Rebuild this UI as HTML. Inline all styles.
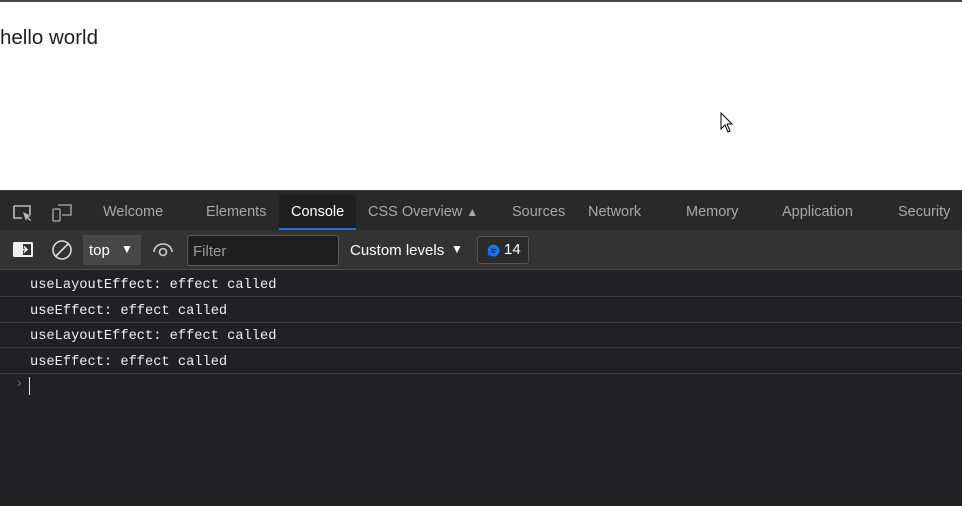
<!DOCTYPE html>
<html><head><meta charset="utf-8"><style>
*{margin:0;padding:0;box-sizing:border-box}
body{width:962px;height:506px;overflow:hidden;background:#fff;font-family:"Liberation Sans",sans-serif;position:relative}
.top{position:absolute;left:0;top:0;width:962px;height:2px;background:#4a4a4a}
.hello{position:absolute;left:0;top:26px;font-size:20.5px;color:#222}
.dt{position:absolute;left:0;top:190px;width:962px;height:316px;background:#202124}
.tabs{position:absolute;left:0;top:0;width:962px;height:40px;background:#292929;border-top:1px solid #3c3c3c}
.tab{position:absolute;top:13px;font-size:14.5px;color:#a8a8a8}
.active{position:absolute;left:279px;top:4px;width:77px;height:36px;background:#1f1f1f;border-bottom:3px solid #1a73e8}
.tb{position:absolute;left:0;top:40px;width:962px;height:40px;background:#333;border-bottom:1px solid #4a4a4a}
.line{position:absolute;left:0;width:962px;height:25.5px;border-bottom:1px solid #3a3a3a;font-family:"Liberation Mono",monospace;font-size:13.7px;color:#f0f0f0;padding-left:30px;line-height:30px}
</style></head><body>
<div class="top"></div>
<div class="hello">hello world</div>
<svg style="position:absolute;left:720px;top:112px" width="14" height="22" viewBox="0 0 14 22"><path d="M1 1 L1 17 L5 13 L8 20 L10 19 L7 12 L12 12 Z" fill="#fff" stroke="#000" stroke-width="1"/></svg>
<div class="dt">
 <div class="tabs">
  <div class="active"></div>
  <svg style="position:absolute;left:12px;top:13px" width="22" height="18" viewBox="0 0 22 18"><path d="M2 2h16v9M2 2v12h8" fill="none" stroke="#bbb" stroke-width="1.6"/><path d="M11 8l8 4-3 1 3 3-1 1-3-3-1 3z" fill="#bbb"/></svg>
  <svg style="position:absolute;left:51px;top:12px" width="22" height="20" viewBox="0 0 22 20"><rect x="2" y="6" width="7" height="12" rx="1" fill="none" stroke="#999" stroke-width="1.5"/><path d="M7 2h13v10h-9" fill="none" stroke="#999" stroke-width="1.5"/></svg>
  <span class="tab" style="left:103px">Welcome</span>
  <span class="tab" style="left:206px">Elements</span>
  <span class="tab" style="left:291px;color:#fff">Console</span>
  <span class="tab" style="left:368px">CSS Overview <span style="font-size:12px">&#9650;</span></span>
  <span class="tab" style="left:512px">Sources</span>
  <span class="tab" style="left:588px">Network</span>
  <span class="tab" style="left:686px">Memory</span>
  <span class="tab" style="left:782px">Application</span>
  <span class="tab" style="left:898px">Security</span>
 </div>
 <div class="tb">
  <svg style="position:absolute;left:12px;top:11px" width="22" height="18" viewBox="0 0 22 18"><rect x="1" y="1" width="20" height="15" rx="1.5" fill="#eee"/><rect x="11" y="3" width="8" height="11" fill="#333"/><path d="M8 8.5h7M12 5.5l3 3-3 3" stroke="#eee" stroke-width="1.5" fill="none"/></svg>
  <svg style="position:absolute;left:51px;top:9px" width="22" height="22" viewBox="0 0 22 22"><circle cx="11" cy="11" r="9" fill="none" stroke="#ddd" stroke-width="1.6"/><path d="M5 17L17 5" stroke="#ddd" stroke-width="1.6"/></svg>
  <div style="position:absolute;left:83px;top:5px;width:58px;height:30px;background:#474747"></div>
  <span style="position:absolute;left:89px;top:12px;font-size:15px;color:#fff">top</span>
  <span style="position:absolute;left:121px;top:12px;font-size:12px;color:#fff">&#9660;</span>
  <svg style="position:absolute;left:152px;top:10px" width="22" height="20" viewBox="0 0 22 20"><path d="M2 12a9 8 0 0 1 18 0" fill="none" stroke="#ccc" stroke-width="1.6"/><circle cx="11" cy="12" r="3.5" fill="none" stroke="#ccc" stroke-width="1.6"/></svg>
  <div style="position:absolute;left:187px;top:5px;width:152px;height:31px;background:#1f1f1f;border:1px solid #5a5a5a;border-radius:3px"></div>
  <span style="position:absolute;left:193px;top:13px;font-size:15px;color:#999">Filter</span>
  <span style="position:absolute;left:350px;top:12px;font-size:15px;color:#fff">Custom levels</span>
  <span style="position:absolute;left:451px;top:12px;font-size:12px;color:#fff">&#9660;</span>
  <div style="position:absolute;left:477px;top:6px;width:52px;height:28px;border:1px solid #555;border-radius:3px;background:#2a2a2a"></div>
  <svg style="position:absolute;left:487px;top:14px" width="13" height="13" viewBox="0 0 13 13"><path d="M6.5 0.5a6 6 0 1 1-4 10.5L0.5 12.5 1.5 9.5A6 6 0 0 1 6.5 0.5z" fill="#1a73e8"/><path d="M4 5.5h5M4 8h4" stroke="#202124" stroke-width="1.2"/></svg>
  <span style="position:absolute;left:504px;top:11px;font-size:15px;color:#fff">14</span>
 </div>
 <div class="line" style="top:81px">useLayoutEffect: effect called</div>
 <div class="line" style="top:107px">useEffect: effect called</div>
 <div class="line" style="top:132px">useLayoutEffect: effect called</div>
 <div class="line" style="top:158px">useEffect: effect called</div>
 <span style="position:absolute;left:15px;top:186px;font-size:14px;color:#4a6fa5;font-family:'Liberation Mono',monospace">&#8250;</span>
 <div style="position:absolute;left:29px;top:187px;width:1px;height:18px;background:#e8e8e8"></div>
</div>
</body></html>
